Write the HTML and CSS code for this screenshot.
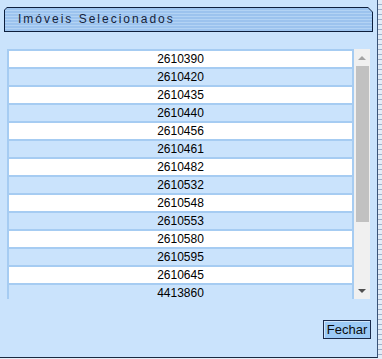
FILE: index.html
```html
<!DOCTYPE html>
<html lang="pt-BR">
<head>
  <meta charset="UTF-8" />
  <title>Imóveis Selecionados</title>
  <link rel="stylesheet" href="styles.css">
</head>
<body>
  <div class="janela">
    <!-- Título da janela -->
    <div class="aba">
      <div class="aba-fundo">
        <span>Imóveis Selecionados</span>
      </div>
    </div>

    <!-- Lista de imóveis -->
    <div class="lista">
      <div class="lista-corpo">
        <table class="tabela">
          <tr><td>2610390</td></tr>
          <tr><td>2610420</td></tr>
          <tr><td>2610435</td></tr>
          <tr><td>2610440</td></tr>
          <tr><td>2610456</td></tr>
          <tr><td>2610461</td></tr>
          <tr><td>2610482</td></tr>
          <tr><td>2610532</td></tr>
          <tr><td>2610548</td></tr>
          <tr><td>2610553</td></tr>
          <tr><td>2610580</td></tr>
          <tr><td>2610595</td></tr>
          <tr><td>2610645</td></tr>
          <tr><td>4413860</td></tr>
        </table>
      </div>
      <div class="rolagem">
        <span class="seta seta-cima"></span>
        <span class="barra"></span>
        <span class="trilho"></span>
        <span class="seta seta-baixo"></span>
      </div>
    </div>

    <div class="acoes">
      <button class="btn">Fechar</button>
    </div>
  </div>
  <div class="borda"></div>
</body>
</html>
```

FILE: styles.css
```css
* {
  box-sizing: border-box;
  margin: 0;
  padding: 0;
}

body {
  font-family: 'Liberation Sans', Arial, sans-serif;
  display: flex;
  width: 382px;
  height: 359px;
  overflow: hidden;
  background: #e3edf8;
}

.janela {
  width: 378px;
  height: 358px;
  background: #cae3fc;
  border-right: 1px solid #3a5478;
  border-bottom: 1px solid #1a2a40;
  padding-top: 7px;
}

.borda {
  flex: 1;
  background: repeating-linear-gradient(to bottom, #e3edf8 0, #e3edf8 4px, #9fb3cc 4px, #9fb3cc 5px);
}

/* Aba do título */
.aba {
  margin-left: 4px;
  width: 369px;
  height: 25px;
  padding: 1px;
  background: #0d1f3d;
  clip-path: polygon(3px 0, calc(100% - 5px) 0, 100% 5px, 100% 100%, 0 100%, 0 3px);
}

.aba-fundo {
  height: 100%;
  padding-left: 13px;
  background: repeating-linear-gradient(to bottom, #9cc3ee 0, #9cc3ee 2px, #b3d3f4 2px, #b3d3f4 3px);
  clip-path: polygon(2px 0, calc(100% - 4px) 0, 100% 4px, 100% 100%, 0 100%, 0 2px);
}

.aba-fundo span {
  font-size: 12px;
  line-height: 22px;
  letter-spacing: 2px;
  color: #15223a;
}

/* Lista */
.lista {
  display: flex;
  margin: 17px 0 0 7px;
  height: 250px;
}

.lista-corpo {
  width: 347px;
  overflow: hidden;
}

.tabela {
  width: 100%;
  border-spacing: 2px;
  background: #a6ccf2;
}

.tabela td {
  height: 16px;
  padding: 0;
  font-size: 12px;
  line-height: 16px;
  text-align: center;
  color: #000;
  background: #fff;
}

.tabela tr:nth-child(even) td {
  background: #cae3fc;
}

/* Barra de rolagem */
.rolagem {
  width: 16px;
  display: flex;
  flex-direction: column;
  background: #f0f0f0;
}

.seta {
  height: 17px;
  display: flex;
  align-items: center;
  justify-content: center;
}

.seta::before {
  content: '';
  border-left: 4px solid transparent;
  border-right: 4px solid transparent;
}

.seta-cima::before {
  border-bottom: 4px solid #a3a3a3;
}

.seta-baixo::before {
  border-top: 4px solid #505050;
}

.barra {
  height: 156px;
  margin: 0 1px 0 2px;
  background: #c1c1c1;
}

.trilho {
  flex: 1;
}

/* Botão */
.acoes {
  display: flex;
  justify-content: flex-end;
  padding-right: 6px;
  margin-top: 21px;
}

.btn {
  width: 48px;
  height: 19px;
  font-family: 'Liberation Sans', Arial, sans-serif;
  font-size: 13px;
  color: #0a0a0a;
  background: #9ccaf6;
  border: 1px solid #1a2a4a;
  box-shadow: inset 1px 1px #cfe5fb;
}
```
